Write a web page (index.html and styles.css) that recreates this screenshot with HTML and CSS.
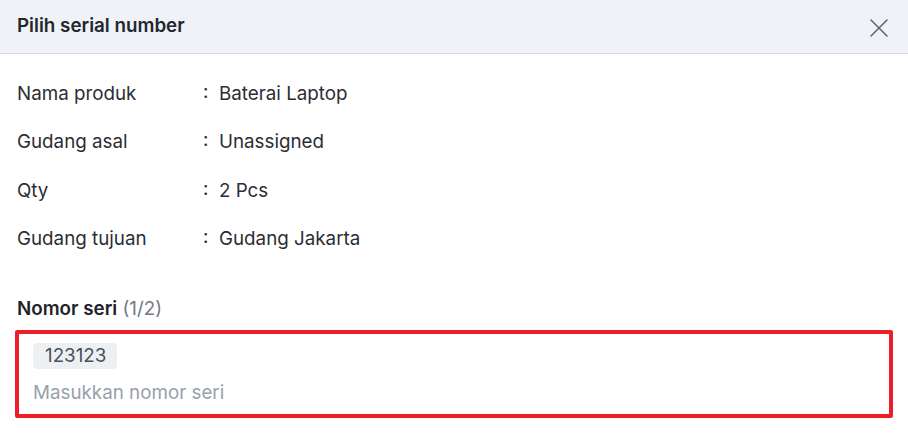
FILE: index.html
```html
<!DOCTYPE html>
<html lang="id">
<head>
<meta charset="utf-8">
<link rel="stylesheet" href="styles.css">
</head>
<body>
<div class="modal">
  <header class="modal-header">
    <h1 class="modal-title">Pilih serial number</h1>
    <button class="close-btn" aria-label="Tutup">
      <svg width="20" height="20" viewBox="0 0 20 20" fill="none" stroke="#5f6673" stroke-width="1.6" stroke-linecap="round">
        <path d="M2 2L18 18M18 2L2 18"/>
      </svg>
    </button>
  </header>
  <div class="modal-body">
    <dl class="info">
      <div class="info-row"><dt>Nama produk</dt><dd>:&nbsp; Baterai Laptop</dd></div>
      <div class="info-row"><dt>Gudang asal</dt><dd>:&nbsp; Unassigned</dd></div>
      <div class="info-row"><dt>Qty</dt><dd>:&nbsp; 2 Pcs</dd></div>
      <div class="info-row"><dt>Gudang tujuan</dt><dd>:&nbsp; Gudang Jakarta</dd></div>
    </dl>
    <div class="field-label"><strong>Nomor seri</strong> <span class="count">(1/2)</span></div>
    <div class="serial-box">
      <span class="tag">123123</span>
      <div class="placeholder">Masukkan nomor seri</div>
    </div>
  </div>
</div>
</body>
</html>
```
FILE: styles.css
```css
* { box-sizing: border-box; }
html, body { margin: 0; padding: 0; background: #fff; }
body { font-family: Inter, "Noto Sans", sans-serif; color: #262a30; }
.modal { width: 908px; height: 438px; overflow: hidden; }
.modal-header {
  height: 54px;
  background: #f0f2f7;
  border-bottom: 1px solid #d5d9e0;
  display: flex;
  align-items: center;
  justify-content: space-between;
  padding: 0 19px 3px 17px;
}
.modal-title { margin: 0; font-size: 18.8px; font-weight: 600; color: #23272d; }
.close-btn { background: none; border: 0; padding: 0; width: 20px; height: 20px; display: flex; margin-top: 5px; }
.modal-body { padding: 28px 15px 0 17px; }
.info { margin: 0; display: flex; flex-direction: column; gap: 24.4px; }
.info-row { display: flex; height: 24px; align-items: center; font-size: 18.8px; line-height: 24px; color: #2a2e34; }
.info-row dt { width: 186px; }
.info-row dd { margin: 0; }
.field-label { margin-top: 46px; font-size: 18.8px; line-height: 24px; }
.field-label strong { font-weight: 600; color: #1f2329; }
.count { color: #727985; }
.serial-box {
  margin: 9px 0 0 -2px;
  width: 878px;
  height: 88px;
  border: 4px solid #ec1f28;
  border-radius: 2px;
  padding: 9px 14px 0;
}
.tag {
  display: inline-block;
  height: 26px;
  padding: 0 11px 0 12px;
  background: #edf0f3;
  border-radius: 4px;
  font-size: 18.8px;
  line-height: 26px;
  color: #4a505a;
}
.placeholder { margin-top: 12px; font-size: 18.8px; line-height: 24px; color: #98a0ad; }
```
